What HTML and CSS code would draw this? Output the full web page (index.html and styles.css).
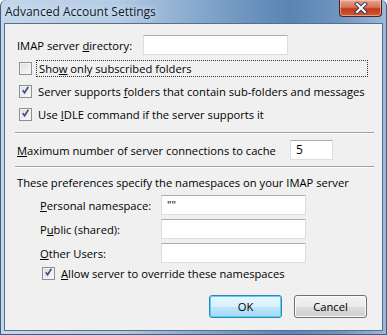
FILE: index.html
```html
<!DOCTYPE html>
<html lang="en">
<head>
    <meta charset="UTF-8">
    <title>Advanced Account Settings</title>
    <link rel="stylesheet" href="styles.css">
</head>
<body>
    <div class="window">
        <div class="titlebar">
            <span class="title">Advanced Account Settings</span>
            <span class="close">
                <svg width="14" height="12" viewBox="0 0 14 12">
                    <path d="M3 2 L11 10 M11 2 L3 10" stroke="#3b3b52" stroke-width="4" stroke-linecap="square"/>
                    <path d="M3 2 L11 10 M11 2 L3 10" stroke="#ffffff" stroke-width="2" stroke-linecap="square"/>
                </svg>
            </span>
        </div>
        <div class="client">
            <div class="field-row">
                <span class="label dir-label">IMAP server <u>d</u>irectory:</span>
                <span class="textbox dir-box"></span>
            </div>

            <div class="check-row first">
                <span class="checkbox"></span>
                <span class="check-label focused">Sho<u>w</u> only subscribed folders</span>
            </div>
            <div class="check-row">
                <span class="checkbox checked"></span>
                <span class="check-label">Server supports <u>f</u>olders that contain sub-folders and messages</span>
            </div>
            <div class="check-row">
                <span class="checkbox checked"></span>
                <span class="check-label">Use <u>I</u>DLE command if the server supports it</span>
            </div>

            <div class="sep"></div>

            <div class="field-row max-row">
                <span class="label max-label"><u>M</u>aximum number of server connections to cache</span>
                <span class="textbox max-box">5</span>
            </div>

            <div class="sep second"></div>

            <div class="intro">These preferences specify the namespaces on your IMAP server</div>

            <div class="ns">
                <div class="field-row ns-row">
                    <span class="label ns-label"><u>P</u>ersonal namespace:</span>
                    <span class="textbox ns-box">""</span>
                </div>
                <div class="field-row ns-row">
                    <span class="label ns-label">P<u>u</u>blic (shared):</span>
                    <span class="textbox ns-box"></span>
                </div>
                <div class="field-row ns-row">
                    <span class="label ns-label"><u>O</u>ther Users:</span>
                    <span class="textbox ns-box"></span>
                </div>
                <div class="check-row ns-check">
                    <span class="checkbox checked"></span>
                    <span class="check-label"><u>A</u>llow server to override these namespaces</span>
                </div>
            </div>

            <div class="buttons">
                <span class="button default">OK</span>
                <span class="button">Cancel</span>
            </div>
        </div>
    </div>
</body>
</html>
```

FILE: styles.css
```css
body {
    margin: 0;
    font-family: "Open Sans", "Noto Sans", sans-serif;
    font-size: 11.2px;
    color: #000;
}
.window {
    width: 387px;
    height: 335px;
    box-sizing: border-box;
    display: flex;
    flex-direction: column;
    padding: 0 3px 3px 3px;
    background: linear-gradient(90deg, #c3d6ea 0%, #b4cbe3 30%, #7ea2c9 55%, #5a84b3 75%, #6f95bf 88%, #9cb9d8 100%);
    border-left: 1px solid #3f5f86;
    border-right: 1px solid #3f5f86;
    border-bottom: 1px solid #3f5f86;
    border-radius: 6px 6px 0 0;
}
.titlebar {
    height: 23px;
    display: flex;
    justify-content: space-between;
    align-items: flex-start;
}
.title {
    font-size: 12px;
    margin: 3px 0 0 1px;
    color: #0b1b30;
    text-shadow: 0 0 6px rgba(255,255,255,0.9);
}
.close {
    width: 43px;
    height: 17px;
    margin-right: 1px;
    box-sizing: border-box;
    border: 1px solid #4a2228;
    border-top: none;
    border-radius: 0 0 4px 4px;
    background: linear-gradient(#e7a592 0%, #d6725a 45%, #c23a1c 55%, #cf5a36 100%);
    box-shadow: inset 0 0 0 1px rgba(255,220,200,0.5);
    display: flex;
    justify-content: center;
    align-items: center;
}
.client {
    flex: 1;
    background: #f0f0f0;
    border: 1px solid #55708f;
    padding: 11px 0 0 12px;
    display: flex;
    flex-direction: column;
}
.field-row {
    display: flex;
    align-items: center;
}
.textbox {
    display: block;
    box-sizing: border-box;
    height: 20px;
    background: #fff;
    border: 1px solid #d9dde4;
    border-top-color: #abadb3;
    border-radius: 1px;
    padding: 0 0 0 5px;
    line-height: 18px;
}
.dir-label {
    width: 126px;
}
.dir-box {
    width: 145px;
}
.check-row {
    display: flex;
    align-items: center;
    height: 17px;
    margin-top: 6px;
    padding-left: 2px;
}
.check-row.first {
    margin-top: 5px;
}
.checkbox {
    width: 13px;
    height: 13px;
    box-sizing: border-box;
    border: 1px solid #8e8f8f;
    background: linear-gradient(135deg, #dcdcdc, #fbfbfb);
    box-shadow: inset 0 0 0 1px #f4f4f4;
    margin-right: 4px;
    position: relative;
}
.checkbox.checked::after {
    content: "";
    position: absolute;
    left: 2px;
    top: 0px;
    width: 7px;
    height: 8px;
    background: url("data:image/svg+xml;utf8,<svg xmlns='http://www.w3.org/2000/svg' width='7' height='8'><path d='M0.8 4.2 L2.6 6.8 L6.4 0.8' stroke='%233b4f86' stroke-width='1.6' fill='none'/></svg>") no-repeat;
}
.check-label {
    padding: 0 0 0 2px;
    line-height: 15px;
}
.check-label.focused {
    width: 328px;
    border: 1px dotted #333;
}
.sep {
    height: 1px;
    margin: 9px 8px 0 -2px;
    background: #a0a0a0;
    border-bottom: 1px solid #fff;
}
.sep.second {
    margin-top: 6px;
}
.max-row {
    margin-top: 6px;
}
.max-label {
    width: 273px;
}
.max-box {
    width: 43px;
    font-size: 12px;
}
.intro {
    margin-top: 7px;
    line-height: 16px;
}
.ns {
    padding-left: 23px;
}
.ns-row {
    margin-top: 4px;
}
.ns-label {
    width: 121px;
}
.ns-box {
    width: 145px;
}
.ns-check {
    margin-top: 2px;
}
.buttons {
    display: flex;
    gap: 12px;
    margin: 13px 0 0 192px;
}
.button {
    width: 73px;
    height: 23px;
    box-sizing: border-box;
    border: 1px solid #707070;
    border-radius: 3px;
    background: linear-gradient(#f2f2f2 0%, #ebebeb 50%, #dddddd 50%, #cfcfcf 100%);
    box-shadow: inset 0 0 0 1px #fcfcfc;
    display: flex;
    justify-content: center;
    align-items: center;
}
.button.default {
    border-color: #3c7fb1;
    background: linear-gradient(#eaf6fd 0%, #d9f0fc 50%, #bee6fd 50%, #a7d9f5 100%);
    box-shadow: inset 0 0 0 1px #48d8fb;
}
```
